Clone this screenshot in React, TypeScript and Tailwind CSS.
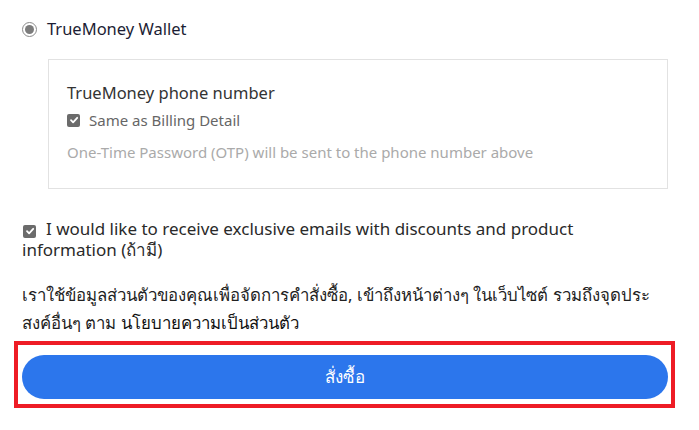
import { useState } from 'react';

function CheckBox({ checked }: { checked: boolean }) {
  return (
    <span
      className={`inline-flex items-center justify-center w-[13px] h-[13px] rounded-[2px] shrink-0 ${
        checked ? 'bg-[#6b6b6b]' : 'border border-[#999] bg-white'
      }`}
    >
      {checked && (
        <svg width="10" height="10" viewBox="0 0 10 10" fill="none">
          <path d="M2 5.2 L4.1 7.3 L8.2 2.8" stroke="white" strokeWidth="1.8" strokeLinecap="round" strokeLinejoin="round" />
        </svg>
      )}
    </span>
  );
}

export default function App() {
  const [sameBilling, setSameBilling] = useState(true);
  const [newsletter, setNewsletter] = useState(true);

  return (
    <div className="w-[699px] h-[430px] bg-white overflow-hidden font-['Noto_Sans','Liberation_Sans',sans-serif]">
      <div className="pl-[22px] pr-[31px] pt-[20px]">
        <label className="flex items-center gap-[10px] h-[18px] cursor-pointer">
          <span className="w-[15px] h-[15px] rounded-full border border-[#8a8a8a] flex items-center justify-center bg-white">
            <span className="w-[9px] h-[9px] rounded-full bg-[#7c7c7c]" />
          </span>
          <span className="text-[16.5px] text-[#1c1d34] leading-none">TrueMoney Wallet</span>
        </label>

        <div className="ml-[26px] mt-[21px] w-[620px] h-[130px] border border-[#e2e2e2] pl-[18px] pt-[23px]">
          <div className="text-[16.5px] text-[#333] leading-[20px]">TrueMoney phone number</div>
          <button
            onClick={() => setSameBilling(!sameBilling)}
            className="flex items-center gap-[9px] mt-[8px]"
          >
            <CheckBox checked={sameBilling} />
            <span className="text-[15px] text-[#666] leading-[18px]">Same as Billing Detail</span>
          </button>
          <div className="mt-[14px] text-[15px] text-[#aaa] leading-[18px]">
            One-Time Password (OTP) will be sent to the phone number above
          </div>
        </div>

        <div className="mt-[29px] text-[17px] text-[#2a2a2a] leading-[21px]">
          <button onClick={() => setNewsletter(!newsletter)} className="inline-flex align-[-1px] mr-[10px] ml-[1px]">
            <CheckBox checked={newsletter} />
          </button>
          I would like to receive exclusive emails with discounts and product
          <br />
          information (ถ้ามี)
        </div>

        <p className="mt-[21px] text-[16.8px] text-[#222] leading-[28px]">
          เราใช้ข้อมูลส่วนตัวของคุณเพื่อจัดการคำสั่งซื้อ, เข้าถึงหน้าต่างๆ ในเว็บไซต์ รวมถึงจุดประ
          <br />
          สงค์อื่นๆ ตาม <a className="text-[#111] cursor-pointer">นโยบายความเป็นส่วนตัว</a>
        </p>
      </div>

      <div className="ml-[14px] mt-[4px] w-[661px] h-[67px] border-[4px] border-[#ee1c25] pl-[4px] pr-[3px] pt-[10px]">
        <button className="w-full h-[44px] rounded-full bg-[#2c76ec] text-white text-[17px] font-medium">
          สั่งซื้อ
        </button>
      </div>
    </div>
  );
}
